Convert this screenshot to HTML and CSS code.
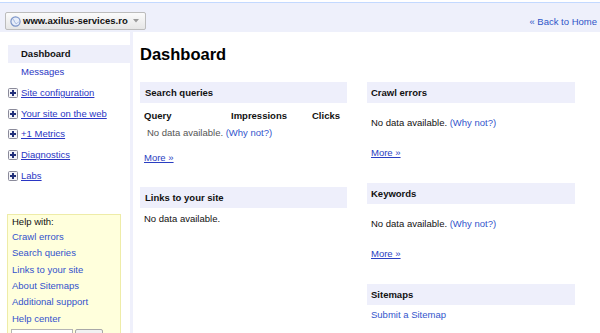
FILE: index.html
```html
<!DOCTYPE html>
<html>
<head>
<meta charset="utf-8">
<title>Dashboard</title>
<link rel="stylesheet" href="styles.css">
</head>
<body>
<div class="topbar">
  <div class="site-select">
    <svg class="globe" width="11" height="11" viewBox="0 0 11 11">
      <circle cx="5.5" cy="5.5" r="4.6" fill="#e8eefa" stroke="#7a93c8" stroke-width="1.2"/>
      <path d="M3 3.2 C4.5 4 4 6.5 6 7.5 C7 8 7.5 6.5 8.5 6" fill="none" stroke="#9fb3dc" stroke-width="1"/>
    </svg>
    <span class="site-name">www.axilus-services.ro</span>
    <svg class="caret" width="6" height="4" viewBox="0 0 6 4"><path d="M0 0 H6 L3 3.5 Z" fill="#9a9a9a"/></svg>
  </div>
  <a class="back-home" href="#">« Back to Home</a>
</div>
<div class="layout">
  <div class="sidebar">
    <div class="nav-current">Dashboard</div>
    <div class="nav-item"><a href="#" class="nav-link">Messages</a></div>
    <div class="nav-groups">
      <div class="nav-group"><svg class="plus" width="10" height="10" viewBox="0 0 10 10"><rect x="0.5" y="0.5" width="9" height="9" rx="1" fill="#f4f4f8" stroke="#8a8a9a"/><path d="M5 2 V8 M2 5 H8" stroke="#22307a" stroke-width="2"/></svg><a href="#" class="group-link">Site configuration</a></div>
      <div class="nav-group"><svg class="plus" width="10" height="10" viewBox="0 0 10 10"><rect x="0.5" y="0.5" width="9" height="9" rx="1" fill="#f4f4f8" stroke="#8a8a9a"/><path d="M5 2 V8 M2 5 H8" stroke="#22307a" stroke-width="2"/></svg><a href="#" class="group-link">Your site on the web</a></div>
      <div class="nav-group"><svg class="plus" width="10" height="10" viewBox="0 0 10 10"><rect x="0.5" y="0.5" width="9" height="9" rx="1" fill="#f4f4f8" stroke="#8a8a9a"/><path d="M5 2 V8 M2 5 H8" stroke="#22307a" stroke-width="2"/></svg><a href="#" class="group-link">+1 Metrics</a></div>
      <div class="nav-group"><svg class="plus" width="10" height="10" viewBox="0 0 10 10"><rect x="0.5" y="0.5" width="9" height="9" rx="1" fill="#f4f4f8" stroke="#8a8a9a"/><path d="M5 2 V8 M2 5 H8" stroke="#22307a" stroke-width="2"/></svg><a href="#" class="group-link">Diagnostics</a></div>
      <div class="nav-group"><svg class="plus" width="10" height="10" viewBox="0 0 10 10"><rect x="0.5" y="0.5" width="9" height="9" rx="1" fill="#f4f4f8" stroke="#8a8a9a"/><path d="M5 2 V8 M2 5 H8" stroke="#22307a" stroke-width="2"/></svg><a href="#" class="group-link">Labs</a></div>
    </div>
    <div class="help-box">
      <div class="help-title">Help with:</div>
      <a href="#" class="help-link">Crawl errors</a>
      <a href="#" class="help-link">Search queries</a>
      <a href="#" class="help-link">Links to your site</a>
      <a href="#" class="help-link">About Sitemaps</a>
      <a href="#" class="help-link">Additional support</a>
      <a href="#" class="help-link">Help center</a>
      <div class="help-search">
        <input class="help-input" type="text">
        <button class="help-button" aria-label="Search"></button>
      </div>
    </div>
  </div>
  <div class="main">
    <h1 class="page-title">Dashboard</h1>
    <div class="columns">
      <div class="column">
        <div class="card card-queries">
          <div class="card-header">Search queries</div>
          <div class="queries-body">
            <div class="queries-head">
              <span>Query</span><span>Impressions</span><span>Clicks</span>
            </div>
            <div class="queries-empty">No data available. <a href="#" class="why">(Why not?)</a></div>
            <a href="#" class="more">More »</a>
          </div>
        </div>
        <div class="card">
          <div class="card-header">Links to your site</div>
          <div class="links-body">No data available.</div>
        </div>
      </div>
      <div class="column">
        <div class="card card-right">
          <div class="card-header card-header-right">Crawl errors</div>
          <div class="right-body">
            <div class="empty">No data available. <a href="#" class="why">(Why not?)</a></div>
            <a href="#" class="more">More »</a>
          </div>
        </div>
        <div class="card card-right">
          <div class="card-header card-header-right">Keywords</div>
          <div class="right-body">
            <div class="empty">No data available. <a href="#" class="why">(Why not?)</a></div>
            <a href="#" class="more">More »</a>
          </div>
        </div>
        <div class="card card-right">
          <div class="card-header card-header-right">Sitemaps</div>
          <div class="sitemaps-body"><a href="#" class="why">Submit a Sitemap</a></div>
        </div>
      </div>
    </div>
  </div>
</div>
</body>
</html>
```

FILE: styles.css
```css
html, body {
  margin: 0;
  padding: 0;
  overflow: hidden;
  height: 333px;
  background: #ffffff;
}
body {
  font-family: "Liberation Sans", Arial, sans-serif;
  font-size: 9.5px;
  line-height: 12px;
  color: #111;
}
a { text-decoration: none; }

.topbar {
  margin-top: 2px;
  border-top: 1px solid #c3d9ff;
  background: #eef0fb;
  height: 29px;
  display: flex;
  justify-content: space-between;
  align-items: flex-start;
}
.site-select {
  margin-left: 5px;
  margin-top: 9px;
  box-sizing: border-box;
  width: 141px;
  height: 18px;
  border: 1px solid #bcbcbc;
  border-radius: 2px;
  background: linear-gradient(#fbfbfb, #e6e6e6);
  display: flex;
  align-items: center;
  padding-left: 4px;
}
.globe { flex: none; }
.site-name {
  font-weight: bold;
  margin-left: 2px;
  color: #111;
}
.caret { margin-left: 5px; flex: none; }
.back-home {
  margin-top: 12.5px;
  margin-right: 3px;
  color: #2f55c8;
}

.layout {
  display: flex;
  height: 301px;
}
.sidebar {
  margin-left: 8px;
  width: 122px;
  border-right: 3px solid #eff0fb;
  padding-top: 13px;
  box-sizing: content-box;
}
.nav-current {
  height: 18px;
  line-height: 18px;
  padding-left: 13px;
  font-weight: bold;
  background: #eeeffa;
  color: #111;
}
.nav-item {
  height: 18px;
  line-height: 18px;
  padding-left: 13px;
}
.nav-link { color: #2a36c4; }
.nav-groups { margin-top: 1.6px; }
.nav-group {
  height: 20.75px;
  display: flex;
  align-items: center;
  gap: 3px;
}
.plus { flex: none; }
.group-link {
  color: #2a36c4;
  text-decoration: underline;
}

.help-box {
  margin-top: 27.6px;
  margin-left: -1px;
  width: 114px;
  box-sizing: border-box;
  border: 1px solid #eeeca8;
  border-bottom: none;
  background: #ffffdc;
  padding-left: 4px;
  height: 120px;
  display: flex;
  flex-direction: column;
}
.help-title {
  line-height: 14px;
  color: #111;
}
.help-link {
  line-height: 16.33px;
  color: #3352cc;
}
.help-search {
  margin-top: 2px;
  display: flex;
  gap: 2px;
  margin-left: -1px;
}
.help-input {
  width: 62px;
  height: 14px;
  box-sizing: border-box;
  border: 1px solid #b5b5b5;
  padding: 0;
  margin: 0;
  background: #fff;
}
.help-button {
  width: 28px;
  height: 14px;
  box-sizing: border-box;
  border: 1px solid #a8a8a8;
  border-radius: 2px;
  background: #f2f2f2;
  padding: 0;
  margin: 0;
}

.main {
  padding-left: 7px;
  width: 435px;
  flex: none;
}
.page-title {
  margin: 12px 0 18px 0;
  font-size: 16.5px;
  line-height: 20px;
  font-weight: bold;
  color: #000;
}
.columns {
  display: grid;
  grid-template-columns: 207px 208px;
  column-gap: 20px;
}
.card-header {
  height: 21px;
  line-height: 21px;
  background: #eeeffb;
  padding-left: 5px;
  font-weight: bold;
  color: #111;
}
.card-header-right { padding-left: 4px; }

.queries-body { padding: 7px 0 0 4px; }
.queries-head {
  display: grid;
  grid-template-columns: 87px 81px auto;
  font-weight: bold;
  color: #111;
}
.queries-empty {
  margin-top: 5px;
  padding-left: 3px;
  color: #555;
}
.why { color: #3355cc; }
.more {
  display: block;
  width: max-content;
  color: #2a3ec2;
  text-decoration: underline;
}
.queries-body .more { margin-top: 13px; }
.card-queries { margin-bottom: 23px; }
.links-body {
  padding: 5px 0 0 4px;
  color: #111;
}

.card-right { margin-bottom: 24px; }
.right-body { padding: 14px 0 0 4px; }
.right-body .more { margin-top: 18px; }
.empty { color: #111; }
.sitemaps-body { padding: 4px 0 0 4px; }
```
